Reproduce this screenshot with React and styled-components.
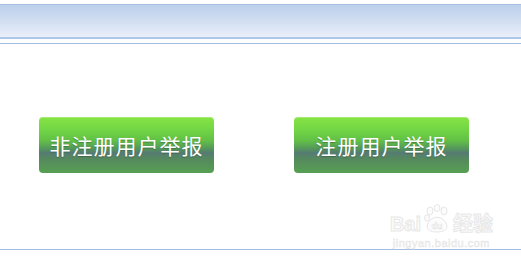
import React from "react";
import styled, { createGlobalStyle } from "styled-components";

const Global = createGlobalStyle`
  html, body { margin: 0; padding: 0; background: #ffffff; }
  body { font-family: "Liberation Serif", "Noto Sans CJK SC", serif; }
`;

const Page = styled.div`
  position: relative;
  width: 521px;
  height: 265px;
  overflow: hidden;
  background: #ffffff;
  padding-top: 4px;
  box-sizing: border-box;
`;

const Header = styled.div`
  height: 32px;
  border-top: 1px solid #a6c0e6;
  border-bottom: 2px solid #aec6ea;
  background: linear-gradient(to bottom, #bcd0eb 0%, #d1def1 50%, #eaf0fa 100%);
`;

const Rule = styled.div`
  height: 1px;
  margin-top: ${(p) => p.$top}px;
  background: #a3bde2;
`;

const ButtonRow = styled.div`
  display: flex;
  gap: 80px;
  padding-left: 39px;
  margin-top: 73px;
`;

const ReportButton = styled.button`
  width: 175px;
  height: 56px;
  border: none;
  border-radius: 4px;
  padding: 0;
  display: flex;
  align-items: center;
  justify-content: center;
  cursor: pointer;
  color: #ffffff;
  font-family: "Noto Sans CJK SC", serif;
  font-size: 21px;
  letter-spacing: 1px;
  text-shadow: 0 1px 1px rgba(40, 70, 40, 0.45);
  background: linear-gradient(
    to bottom,
    #86e444 0%,
    #72d645 22%,
    #62c046 42%,
    #53925e 58%,
    #567a73 64%,
    #55885f 74%,
    #56a052 100%
  );
  box-shadow: inset 0 1px 0 rgba(255, 255, 255, 0.25);
`;

const Watermark = styled.div`
  position: absolute;
  right: 28px;
  bottom: 16px;
  display: flex;
  flex-direction: column;
  align-items: center;
  font-family: "Liberation Sans", "Noto Sans CJK SC", sans-serif;
  pointer-events: none;
`;

const MarkTop = styled.div`
  display: flex;
  align-items: flex-end;
  gap: 2px;
  font-size: 20px;
  font-weight: bold;
  line-height: 1;
  -webkit-text-stroke: 1px #e8e8e8;
  color: #fcfcfc;
`;

const MarkSub = styled.div`
  font-size: 11px;
  margin-top: 3px;
  color: #f6f6f6;
  -webkit-text-stroke: 0.5px #e6e6e6;
  letter-spacing: 0.5px;
`;

function Paw() {
  return (
    <svg width="28" height="30" viewBox="0 0 28 30" fill="#fcfcfc" stroke="#e6e6e6" strokeWidth="1">
      <ellipse cx="7" cy="7" rx="3" ry="4" />
      <ellipse cx="14" cy="4" rx="3" ry="3.5" />
      <ellipse cx="21" cy="7" rx="3" ry="4" />
      <ellipse cx="4" cy="14" rx="2.5" ry="3" />
      <path d="M4 22 Q6 14 14 13 Q22 14 24 22 Q24 28 14 28 Q4 28 4 22Z" />
      <text x="14" y="25" fontSize="9" textAnchor="middle" fill="#fcfcfc" stroke="#e2e2e2" strokeWidth="0.5" fontFamily="Liberation Sans, sans-serif" fontWeight="bold">du</text>
    </svg>
  );
}

export default function App() {
  return (
    <>
      <Global />
      <Page>
        <Header />
        <Rule $top={4} />
        <ButtonRow>
          <ReportButton>非注册用户举报</ReportButton>
          <ReportButton>注册用户举报</ReportButton>
        </ButtonRow>
        <Rule $top={76} />
        <Watermark>
          <MarkTop>
            <span>Bai</span>
            <Paw />
            <span>经验</span>
          </MarkTop>
          <MarkSub>jingyan.baidu.com</MarkSub>
        </Watermark>
      </Page>
    </>
  );
}
